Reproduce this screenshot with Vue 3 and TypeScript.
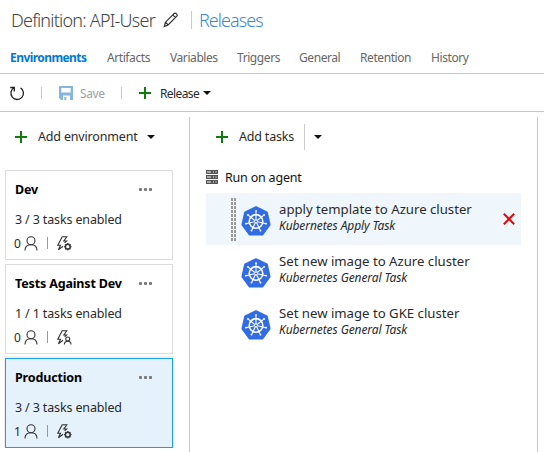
<script setup lang="ts">
interface Environment {
  name: string
  tasks: string
  approvers: number
  trigger: 'gear' | 'person'
  selected: boolean
}

interface Task {
  title: string
  kind: string
  selected: boolean
}

const tabs: string[] = ['Environments', 'Artifacts', 'Variables', 'Triggers', 'General', 'Retention', 'History']

const environments: Environment[] = [
  { name: 'Dev', tasks: '3 / 3 tasks enabled', approvers: 0, trigger: 'gear', selected: false },
  { name: 'Tests Against Dev', tasks: '1 / 1 tasks enabled', approvers: 0, trigger: 'person', selected: false },
  { name: 'Production', tasks: '3 / 3 tasks enabled', approvers: 1, trigger: 'gear', selected: true },
]

const tasks: Task[] = [
  { title: 'apply template to Azure cluster', kind: 'Kubernetes Apply Task', selected: true },
  { title: 'Set new image to Azure cluster', kind: 'Kubernetes General Task', selected: false },
  { title: 'Set new image to GKE cluster', kind: 'Kubernetes General Task', selected: false },
]

const spokes: number[] = [0, 1, 2, 3, 4, 5, 6].map((i) => (i * 360) / 7)
</script>

<template>
  <div class="page">
    <header class="title">
      <span class="name">Definition: API-User</span>
      <svg class="pencil" width="16" height="16" viewBox="0 0 16 16">
        <path d="M1.3 14.5 2.5 10.2 11.2 1.5Q12.3.6 13.5 1.8T13.8 4.2L5.1 12.9ZM2.5 10.2 5.1 12.9M9.8 2.9 12.5 5.6" />
      </svg>
      <span class="bar"></span>
      <span class="releases">Releases</span>
    </header>

    <nav class="tabs">
      <span v-for="(tab, i) in tabs" :key="tab" class="tab" :class="['tab-' + i, { active: i === 0 }]">{{ tab }}</span>
    </nav>

    <div class="toolbar">
      <svg class="refresh" width="16" height="16" viewBox="0 0 16 16">
        <path d="M1.2 2.5H5.3V6.5M5.1 2.7A6.3 6.3 0 1 0 11.6 2.9" />
      </svg>
      <span class="sep sep-a"></span>
      <svg class="disk" width="14" height="14" viewBox="0 0 14 14">
        <path fill-rule="evenodd" d="M0 0H14V14H11V9.5H4V14H2L0 12ZM2.3 2V6.4H11.7V2Z" />
        <path d="M5.3 11H7.3V14H5.3Z" />
      </svg>
      <span class="save">Save</span>
      <span class="sep sep-b"></span>
      <svg class="plus" width="12" height="12" viewBox="0 0 12 12"><path d="M6 0V12M0 6H12" /></svg>
      <span class="release">Release</span>
      <svg class="caret" width="8" height="4" viewBox="0 0 8 4"><path d="M0 0H8L4 4Z" /></svg>
    </div>

    <main class="body">
      <aside class="envs">
        <div class="add-env">
          <svg class="plus" width="12" height="12" viewBox="0 0 12 12"><path d="M6 0V12M0 6H12" /></svg>
          <span class="add-env-text">Add environment</span>
          <svg class="caret" width="8" height="4" viewBox="0 0 8 4"><path d="M0 0H8L4 4Z" /></svg>
        </div>
        <div class="cards">
          <section v-for="env in environments" :key="env.name" class="card" :class="{ selected: env.selected }">
            <div class="card-head">
              <strong>{{ env.name }}</strong>
              <span class="dots"><i></i><i></i><i></i></span>
            </div>
            <div class="enabled">{{ env.tasks }}</div>
            <div class="meta">
              <span class="count">{{ env.approvers }}</span>
              <svg class="line-icon person" width="14" height="15" viewBox="0 0 14 15">
                <circle cx="7" cy="4.7" r="4" />
                <path d="M1 14.5C1 11 3.5 8.8 7 8.8S13 11 13 14.5" />
              </svg>
              <span class="meta-sep"></span>
              <svg class="line-icon" width="15" height="15" viewBox="0 0 15 15">
                <path d="M6 10.2 1.4 13.8 3.5 9.2H.8L5.2.8H9.8L6.8 5H9.6L7.6 6.8" />
                <g v-if="env.trigger === 'gear'">
                  <circle class="gear" cx="10.8" cy="10.7" r="2.4" />
                  <path class="teeth" d="M10.8 7V8M10.8 13.4V14.4M7.1 10.7H8.1M13.5 10.7H14.5M8.2 8.1 8.9 8.8M12.7 12.6 13.4 13.3M13.4 8.1 12.7 8.8M8.9 12.6 8.2 13.3" />
                </g>
                <g v-else>
                  <circle cx="10.7" cy="9" r="2" />
                  <path d="M7.4 14.4C7.4 12.4 8.7 11.2 10.7 11.2S14 12.4 14 14.4" />
                </g>
              </svg>
            </div>
          </section>
        </div>
      </aside>

      <section class="tasks">
        <div class="add-tasks">
          <svg class="plus" width="12" height="12" viewBox="0 0 12 12"><path d="M6 0V12M0 6H12" /></svg>
          <span class="add-tasks-text">Add tasks</span>
          <span class="split"></span>
          <svg class="caret" width="8" height="4" viewBox="0 0 8 4"><path d="M0 0H8L4 4Z" /></svg>
        </div>
        <div class="agent">
          <svg width="12" height="14" viewBox="0 0 12 14">
            <g v-for="y in [0, 5, 10]" :key="y">
              <rect x="0" :y="y" width="12" height="4" fill="#555" />
              <path :d="`M1 ${y + 2}H5M7 ${y + 2}H8M9.5 ${y + 2}H10.5`" stroke="#fff" stroke-width="1" />
            </g>
          </svg>
          <span class="agent-text">Run on agent</span>
        </div>
        <div v-for="task in tasks" :key="task.title" class="task" :class="{ selected: task.selected }">
          <span class="grip"></span>
          <svg class="kube" width="30" height="30" viewBox="0 0 30 30">
            <path class="hept" d="M15 1.2 25.8 6.3 28.6 18.6 21.3 28.6H8.7L1.4 18.6 4.2 6.3Z" />
            <g class="wheel" transform="translate(0 .4)">
              <circle cx="15" cy="15" r="6.8" />
              <path v-for="a in spokes" :key="a" d="M15 13.5V4.6" :transform="`rotate(${a} 15 15)`" />
              <path v-for="a in spokes" :key="'k' + a" class="knob" d="M14.2 4.6H15.8" :transform="`rotate(${a} 15 15)`" />
              <circle class="hub" cx="15" cy="15" r="1.5" />
            </g>
          </svg>
          <div class="task-text">
            <div class="task-title">{{ task.title }}</div>
            <div class="task-kind">{{ task.kind }}</div>
          </div>
          <svg v-if="task.selected" class="remove" width="12" height="12" viewBox="0 0 12 12"><path d="M.8.8 11.2 11.2M11.2.8.8 11.2" /></svg>
        </div>
      </section>
    </main>
  </div>
</template>

<style>
body {
  background: #fff;
  overflow: hidden;
}
</style>

<style scoped>
.page {
  width: 544px;
  height: 452px;
  display: flex;
  flex-direction: column;
  overflow: hidden;
  background: #fff;
  color: #2a2a2a;
  font: 12.5px/16px "Noto Sans", "Open Sans", sans-serif;
  white-space: nowrap;
}
svg {
  display: block;
  flex: none;
}
.title {
  display: flex;
  align-items: center;
  height: 40px;
  padding-left: 11px;
  box-sizing: border-box;
  font-size: 18px;
  font-weight: 300;
  line-height: 24px;
}
.name { width: 152px; letter-spacing: -0.78px; color: #444; }
.pencil { fill: none; stroke: #333; stroke-width: 1.2; }
.bar { width: 1px; height: 18px; margin: 0 8px 0 12px; background: #ccc; }
.releases { margin-left: -1px; color: #3f87cc; letter-spacing: -0.95px; }
.tabs {
  display: flex;
  height: 34px;
  padding: 2px 0 0 10px;
  box-sizing: border-box;
  align-items: center;
  border-bottom: 1px solid #c8c8c8;
  color: #666;
  font-size: 12px;
}
.tab { letter-spacing: -0.42px; }
.tab-0 { width: 97px; }
.tab-1 { width: 63px; }
.tab-2 { width: 67px; }
.tab-3 { width: 62px; }
.tab-4 { width: 61px; }
.tab-5 { width: 71px; }
.active { color: #0078d7; font-weight: 700; letter-spacing: -0.57px; }
.toolbar {
  display: flex;
  flex: none;
  align-items: center;
  height: 38px;
  padding-left: 9px;
  box-sizing: border-box;
  border-bottom: 1px solid #c8c8c8;
  font-size: 12px;
}
.refresh { fill: none; stroke: #222; stroke-width: 1.3; }
.sep { width: 1px; height: 12px; background: #c8c8c8; }
.sep-a { margin: 0 17px 0 16px; }
.sep-b { margin: 0 17px 0 16px; }
.disk { fill: #86b5e0; }
.save { width: 25px; margin-left: 7px; padding-top: 2px; color: #a0a0a0; letter-spacing: -0.4px; }
.plus { fill: none; stroke: #107c10; stroke-width: 2; }
.release { width: 40px; margin: 0 3px 0 9px; padding-top: 2px; letter-spacing: -0.6px; }
.caret { fill: #111; }
.body { display: flex; flex: 1; min-height: 0; padding-top: 5px; }
.envs { width: 189px; border-right: 1px solid #c8c8c8; }
.add-env { display: flex; align-items: center; height: 39px; padding-left: 15px; }
.add-env-text { width: 101px; margin: 0 8px 0 11px; letter-spacing: -0.17px; }
.cards { display: flex; flex-direction: column; gap: 4px; padding: 14px 0 0 5px; }
.card {
  width: 168px;
  height: 90px;
  padding: 10px 9px 0;
  box-sizing: border-box;
  border: 1px solid #dcdcdc;
  background: #fff;
}
.card.selected { border-color: #1ba1e2; background: #e5f1fb; box-shadow: 0 -1px 0 1px #f0f0f0; }
.card-head { display: flex; align-items: center; justify-content: space-between; padding-right: 11px; height: 16px; color: #000; }
.card-head strong { padding-top: 1px; font-size: 12.5px; letter-spacing: -0.15px; }
.dots { display: flex; gap: 2px; }
.dots i { width: 3px; height: 3px; border-radius: 1px; background: #777; }
.enabled { height: 16px; margin-top: 15px; letter-spacing: -0.14px; }
.meta { display: flex; align-items: center; height: 16px; margin-top: 7px; }
.count { width: 9px; padding-top: 1px; font-size: 12px; margin-left: -1px; }
.meta .person { margin-left: 1px; }
.line-icon { fill: none; stroke: #333; stroke-width: 1.1; }
.gear { stroke-width: 1.5; }
.teeth { stroke-width: 1.2; }
.meta-sep { width: 1px; height: 12px; margin: 0 9px; background: #999; }
.tasks { width: 347px; border-right: 1px solid #c8c8c8; }
.add-tasks { display: flex; align-items: center; height: 39px; padding-left: 26px; }
.add-tasks-text { width: 56px; margin: 0 9px 0 11px; letter-spacing: -0.2px; }
.split { width: 1px; height: 26px; margin-right: 9px; background: #ccc; }
.agent { display: flex; align-items: center; height: 37px; padding-left: 16px; box-sizing: border-box; padding-top: 5px; }
.agent-text { margin-left: 7px; padding-top: 1px; color: #111; letter-spacing: -0.2px; }
.task {
  display: flex;
  width: 315px;
  height: 52px;
  margin-left: 16px;
  box-sizing: border-box;
}
.task.selected { background: #eff6fc; }
.grip { width: 5px; height: 44px; margin: 4px 5px 0 25px; }
.task.selected .grip {
  background-image: linear-gradient(#eff6fc 1px, transparent 1px), linear-gradient(90deg, #999 2px, transparent 2px);
  background-size: 3px 4px, 3px 4px;
}
.kube { margin-top: 13px; }
.hept { fill: #326ce5; stroke: #326ce5; stroke-width: 2; stroke-linejoin: round; }
.wheel { fill: none; stroke: #fff; stroke-width: 1.1; }
.wheel circle { stroke-width: 1.6; }
.wheel .hub { fill: #326ce5; stroke-width: 1; }
.wheel .knob { stroke-width: 1.4; }
.task-text { width: 215px; margin-left: 8px; padding-top: 8px; }
.task-title { height: 17px; font-size: 13.2px; letter-spacing: -0.01px; }
.task-kind { font-size: 12px; font-style: italic; letter-spacing: -0.09px; }
.remove { margin: 20px 0 0 9px; fill: none; stroke: #e00b0b; stroke-width: 2; }
</style>
